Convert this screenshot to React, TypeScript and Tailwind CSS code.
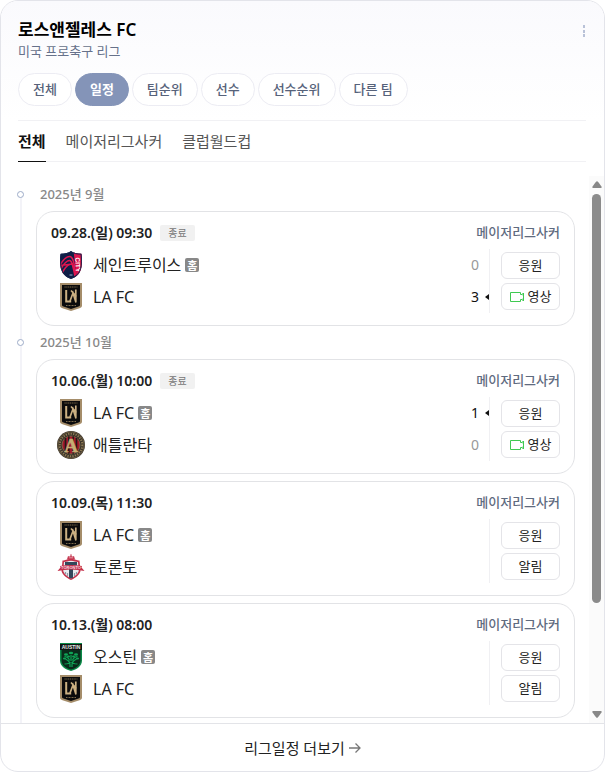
import React, { useState } from 'react';

type TeamId = 'stl' | 'lafc' | 'atl' | 'tor' | 'aus';

interface Side {
  team: TeamId;
  score?: number;
}

interface Match {
  id: string;
  date: string;
  finished: boolean;
  home: Side;
  away: Side;
}

interface Month {
  label: string;
  matches: Match[];
}

const TEAM_NAMES: Record<TeamId, string> = {
  stl: '세인트루이스',
  lafc: 'LA FC',
  atl: '애틀란타',
  tor: '토론토',
  aus: '오스틴',
};

const MENUS = ['전체', '일정', '팀순위', '선수', '선수순위', '다른 팀'];
const LEAGUES = ['전체', '메이저리그사커', '클럽월드컵'];

const MONTHS: Month[] = [
  {
    label: '2025년 9월',
    matches: [
      {
        id: '0928',
        date: '09.28.(일) 09:30',
        finished: true,
        home: { team: 'stl', score: 0 },
        away: { team: 'lafc', score: 3 },
      },
    ],
  },
  {
    label: '2025년 10월',
    matches: [
      {
        id: '1006',
        date: '10.06.(월) 10:00',
        finished: true,
        home: { team: 'lafc', score: 1 },
        away: { team: 'atl', score: 0 },
      },
      { id: '1009', date: '10.09.(목) 11:30', finished: false, home: { team: 'lafc' }, away: { team: 'tor' } },
      { id: '1013', date: '10.13.(월) 08:00', finished: false, home: { team: 'aus' }, away: { team: 'lafc' } },
    ],
  },
];

function LafcLogo() {
  return (
    <svg viewBox="0 0 28 28" className="size-7" aria-hidden="true">
      <path d="M3 0h22v22.500c0 1.500-1 2.200-2.500 2.700L14 28l-8.500-2.800C4 24.700 3 24 3 22.500z" fill="#a58d6a" />
      <path d="M5 2h18v20c0 .9-.6 1.200-1.500 1.500L14 26l-7.500-2.500c-.9-.3-1.500-.6-1.500-1.500z" fill="#0b0b0c" />
      <path d="M7.500 4h13" stroke="#7d6b4c" strokeWidth="1" strokeDasharray="1.200 .6" />
      <path d="M9 22.500h10" stroke="#7d6b4c" strokeWidth="1" strokeDasharray="1 .5" />
      <path d="M9.200 7v11.500h5" stroke="#cbb082" strokeWidth="2" fill="none" />
      <path d="M13 18l3-8 3 9.500M14 7.500l5.500 6M18.800 6.500V19" stroke="#cbb082" strokeWidth="1.700" fill="none" />
    </svg>
  );
}

function StLouisLogo() {
  return (
    <svg viewBox="0 0 28 28" className="size-7" aria-hidden="true">
      <clipPath id="stl-shield">
        <path d="M14 0c2.500 2 6.500 2.800 10.500 2.700.8 5 .7 11-.5 15.300-1.300 5-5 8.500-10 10-5-1.500-8.700-5-10-10C2.800 13.700 2.700 7.700 3.500 2.700 7.500 2.800 11.500 2 14 0z" />
      </clipPath>
      <g clipPath="url(#stl-shield)">
        <path d="M0 0h28v28H0z" fill="#0f1e46" />
        <path d="M16.500 0H28v28h-8z" fill="#e0154f" />
        <path
          d="M3 14C6 9 9 5.500 12.500 5.500 16 5.500 17 11 19 24M3 19c3-5 6-9.500 9.500-9.500C15 9.500 16 15 18 25M4 24c3-6 5.500-10 9-10.500M3 14.500l13-1.500"
          fill="none"
          stroke="#e0154f"
          strokeWidth="1.600"
        />
        <text
          transform="translate(18.200 6.500) rotate(87)"
          fontSize="6.500"
          fontWeight="700"
          fill="#fff"
          fontFamily="Liberation Sans, sans-serif"
        >
          CITY
        </text>
        <path d="M12.500 24h3" stroke="#9fb0d0" strokeWidth="1" />
      </g>
      <path
        d="M14 .6c2.500 1.800 6 2.600 10 2.600.7 5 .6 10.500-.5 14.600-1.300 4.800-4.800 8.200-9.500 9.600-4.700-1.400-8.200-4.800-9.500-9.600C3.400 13.700 3.300 8.200 4 3.200 8 3.200 11.500 2.400 14 .6z"
        fill="none"
        stroke="#16244d"
        strokeWidth="1"
      />
    </svg>
  );
}

function AtlantaLogo() {
  return (
    <svg viewBox="0 0 28 28" className="size-7" aria-hidden="true">
      <circle cx="14" cy="14" r="14" fill="#3a332b" />
      <circle cx="14" cy="14" r="13.200" fill="none" stroke="#756445" strokeWidth=".8" />
      <circle cx="14" cy="14" r="11.300" fill="none" stroke="#8f7c54" strokeWidth="2" strokeDasharray="1.300 1.200" />
      <circle cx="14" cy="14" r="9" fill="#a3182b" stroke="#84714b" strokeWidth=".8" />
      <path d="M8.500 7v14M11.800 5.200v17.600M16.200 5.200v17.600M19.500 7v14" stroke="#241a18" strokeWidth="1.600" />
      <text
        x="14"
        y="20.500"
        textAnchor="middle"
        fontSize="19"
        fontWeight="700"
        fill="#c6ad74"
        stroke="#c6ad74"
        strokeWidth=".5"
        fontFamily="Liberation Serif, serif"
      >
        A
      </text>
    </svg>
  );
}

function TorontoLogo() {
  return (
    <svg viewBox="0 0 28 28" className="size-7" aria-hidden="true">
      <path d="M10 6.500L11 3l1.500.8L14 .8l1.500 3L17 3l1 3.500z" fill="#c4314b" />
      <path d="M5.500 7.500c3 0 4-1.500 8.500-1.500s5.500 1.500 8.500 1.500L23.500 18c-1 4-5 7-9.500 9-4.500-2-8.500-5-9.500-9z" fill="#c4314b" />
      <path d="M7 9c2.500 0 4-1.300 7-1.300S18.500 9 21 9l.8 9c-1 3.200-4.300 5.700-7.800 7.400-3.500-1.700-6.800-4.200-7.800-7.400z" fill="#e8ebef" />
      <path d="M8 9h12v3.200h-4v12.500l-2 .7-2-.7V12.200H8z" fill="#33475b" />
      <path d="M8.500 19v2M10.500 20v3M17.500 20v3M19.500 19v2" stroke="#8f9aa7" strokeWidth="1.200" />
      <path d="M3 13c7-1.300 15-1.300 22 0l-.5 1.500 3 3.500c-9-2-18-2-27 0l3-3.500z" fill="#c4314b" />
      <text
        x="14"
        y="16.300"
        textAnchor="middle"
        fontSize="4"
        fontWeight="700"
        fill="#f6dde1"
        fontFamily="Liberation Sans, sans-serif"
      >
        TORONTO
      </text>
      <path d="M13 2.800h2M11.800 4.800h4.400" stroke="#f2c9d0" strokeWidth=".7" />
    </svg>
  );
}

function AustinLogo() {
  return (
    <svg viewBox="0 0 28 28" className="size-7" aria-hidden="true">
      <path d="M3 0h22v17.500c0 5.500-5 9-11 10.500C8 26.500 3 23 3 17.500z" fill="#0b8a48" />
      <path d="M4.500 1.500h19v16c0 4.500-4.200 7.600-9.500 9-5.300-1.400-9.500-4.500-9.500-9z" fill="#0a2a1b" />
      <path d="M3 1h22v6H3z" fill="#111614" />
      <text
        x="14"
        y="6"
        textAnchor="middle"
        fontSize="5"
        fontWeight="700"
        fill="#e6ece8"
        fontFamily="Liberation Sans, sans-serif"
      >
        AUSTIN
      </text>
      <path
        d="M13 24c.3-4-.2-6-4.500-8M15 24c-.3-4 .2-6 4.500-8M12.500 17.500c-.5-2-2-3.500-5-4M15.500 17.500c.5-2 2-3.500 5-4M14 18v-6M7.500 21c3 0 5-.5 6-2M20.500 21c-3 0-5-.5-6-2"
        fill="none"
        stroke="#0fa456"
        strokeWidth="1.200"
      />
      <g fill="#0fa456">
        <ellipse cx="9" cy="11.500" rx="2" ry="1.200" />
        <ellipse cx="14" cy="10" rx="2.200" ry="1.200" />
        <ellipse cx="19" cy="11.500" rx="2" ry="1.200" />
        <ellipse cx="7.500" cy="15.500" rx="1.600" ry="1.100" />
        <ellipse cx="20.500" cy="15.500" rx="1.600" ry="1.100" />
        <ellipse cx="11.500" cy="13.500" rx="1.500" ry=".9" />
        <ellipse cx="16.500" cy="13.500" rx="1.500" ry=".9" />
      </g>
    </svg>
  );
}

const LOGOS: Record<TeamId, () => React.JSX.Element> = {
  stl: StLouisLogo,
  lafc: LafcLogo,
  atl: AtlantaLogo,
  tor: TorontoLogo,
  aus: AustinLogo,
};

function VideoIcon() {
  return (
    <svg viewBox="0 0 14 12" className="h-3 w-3.5" fill="none" stroke="#3fc951" aria-hidden="true">
      <path d="M10.500 3.500v-2H.5v9h10v-2" />
      <path d="M10.500 3.500h1.500l1.500-1.500v8l-1.500-1.500h-1.500" />
      <path d="M12.500 2.500h1v2h-1zM12.500 7.500h1v2h-1z" fill="#3fc951" stroke="none" />
    </svg>
  );
}

function TeamRow({ side, isHome, won }: { side: Side; isHome?: boolean; won: boolean }) {
  const Logo = LOGOS[side.team];
  return (
    <div className="flex h-8 items-center pl-1.5">
      <Logo />
      <span className="ml-2 text-base leading-5 text-[#222]">{TEAM_NAMES[side.team]}</span>
      {isHome && (
        <span className="ml-1 flex size-3.5 items-center justify-center rounded-xs bg-[#888] text-[11px] leading-none font-bold text-white">
          홈
        </span>
      )}
      {side.score !== undefined && (
        <span className={won ? 'mr-1.5 ml-auto text-sm text-[#111]' : 'mr-2.5 ml-auto text-sm text-[#999]'}>
          {side.score}
        </span>
      )}
      {won && (
        <svg viewBox="0 0 4 6" className="h-1.5 w-1" aria-hidden="true">
          <path d="M4 0v6L0 3z" fill="#111" />
        </svg>
      )}
    </div>
  );
}

function MatchCard({ match }: { match: Match }) {
  const { home, away } = match;
  const homeWon = (home.score ?? 0) > (away.score ?? 0);
  const awayWon = (away.score ?? 0) > (home.score ?? 0);
  const button =
    'flex h-[27px] items-center justify-center gap-1 rounded-md border border-[#e4e4e8] bg-white text-[13px] text-[#222]';

  return (
    <li className="rounded-[18px] border border-[#e2e3e6] bg-white px-3.5 pt-1 pb-3">
      <div className="flex h-[33px] items-center">
        <strong className="text-sm font-semibold text-[#222]">{match.date}</strong>
        {match.finished && (
          <span className="ml-2 rounded-xs bg-[#f1f1f1] px-2 text-[10px] leading-4 text-[#777]">종료</span>
        )}
        <span className="ml-auto text-[13px] font-medium text-[#5f6b7f]">메이저리그사커</span>
      </div>
      <div className="flex">
        <div className="flex-1 border-r border-[#f0f0f3]">
          <TeamRow side={home} isHome won={homeWon} />
          <TeamRow side={away} won={awayWon} />
        </div>
        <div className="ml-[11px] flex w-[59px] flex-col justify-center gap-1">
          <button type="button" className={button}>
            응원
          </button>
          <button type="button" className={button}>
            {match.finished ? (
              <>
                <VideoIcon />
                영상
              </>
            ) : (
              '알림'
            )}
          </button>
        </div>
      </div>
    </li>
  );
}

export default function App() {
  const [menu, setMenu] = useState('일정');
  const [league, setLeague] = useState('전체');

  return (
    <div className="flex h-screen flex-col overflow-hidden rounded-[18px] border border-[#e3e4ea] bg-white font-['Noto_Sans','Noto_Sans_CJK_KR',sans-serif]">
      <header className="bg-linear-to-b from-[#fafafd] to-white pt-[17px] pr-[18px] pl-[17px]">
        <div className="flex items-start justify-between">
          <div>
            <h1 className="text-[17px] leading-6 font-semibold text-black">로스앤젤레스 FC</h1>
            <p className="text-[13px] leading-[18px] text-[#66718a]">미국 프로축구 리그</p>
          </div>
          <button type="button" aria-label="더보기" className="pt-[7px]">
            <svg viewBox="0 0 4 12" className="h-3 w-1" fill="#b9c2d8">
              <path d="M1 0h2v3H1zM1 5h2v3H1zM1 9h2v3H1z" />
            </svg>
          </button>
        </div>
        <nav className="mt-[13px] flex gap-[3px] border-b border-[#f1f1f4] pb-3.5">
          {MENUS.map((item) => (
            <button
              key={item}
              type="button"
              onClick={() => setMenu(item)}
              className={
                item === menu
                  ? 'h-[33px] rounded-full border border-[#8494b8] bg-[#8494b8] px-3.5 text-[13px] font-bold text-white'
                  : 'h-[33px] rounded-full border border-[#ececf3] bg-white px-3.5 text-[13px] font-medium text-[#56627a]'
              }
            >
              {item}
            </button>
          ))}
        </nav>
      </header>

      <nav className="mr-[18px] ml-[17px] flex gap-5 border-b border-[#f1f1f4]">
        {LEAGUES.map((item) => (
          <button
            key={item}
            type="button"
            onClick={() => setLeague(item)}
            className={
              item === league
                ? '-mb-px h-[41px] border-b border-[#111] pt-px text-[15px] font-bold text-[#111]'
                : 'h-10 pt-px text-[15px] text-[#555]'
            }
          >
            {item}
          </button>
        ))}
      </nav>

      <div className="mt-3.5 flex min-h-0 flex-1">
        <div className="min-w-0 flex-1 overflow-hidden pt-0.5 pr-3.5 pl-4">
          {MONTHS.map((month, index) => (
            <section key={month.label}>
              <div className="flex h-[33px] items-center">
                {/* the timeline rule starts at the first dot */}
                <div className="flex h-full w-[7px] flex-col items-center">
                  <span className={index === 0 ? 'w-0.5 flex-1' : 'w-0.5 flex-1 bg-[#f3f3f8]'} />
                  <span className="size-[7px] rounded-full border border-[#9dabc8] bg-white" />
                  <span className="w-0.5 flex-1 bg-[#f3f3f8]" />
                </div>
                <h2 className="ml-4 text-[13px] font-medium text-[#888]">{month.label}</h2>
              </div>
              <div className="ml-[3px] border-l-2 border-[#f3f3f8] pl-3.5">
                <ul className={index === MONTHS.length - 1 ? 'flex flex-col gap-[7px] pb-8' : 'flex flex-col gap-[7px]'}>
                  {month.matches.map((match) => (
                    <MatchCard key={match.id} match={match} />
                  ))}
                </ul>
              </div>
            </section>
          ))}
        </div>
        <div className="flex w-[15px] flex-col items-center bg-[#fbfbfb] py-[5px]" aria-hidden="true">
          <svg viewBox="0 0 10 7" className="h-[7px] w-2.5" fill="#888">
            <path d="M4 .8Q5-.4 6 .8L9.500 5.500Q10 7 9 7H1Q0 7 .5 5.500z" />
          </svg>
          <div className="my-1.5 flex w-[9px] flex-1 flex-col">
            <div className="h-4/5 rounded-full bg-[#8b8b8b]" />
          </div>
          <svg viewBox="0 0 10 7" className="h-[7px] w-2.5" fill="#888">
            <path d="M4 6.200Q5 7.400 6 6.200L9.500 1.500Q10 0 9 0H1Q0 0 .5 1.500z" />
          </svg>
        </div>
      </div>

      <footer className="border-t border-[#e3e4e8]">
        <a href="#schedule" className="flex h-[47px] items-center justify-center gap-1 pt-px text-[15px] text-[#222]">
          리그일정 더보기
          <svg viewBox="0 0 12 12" className="size-3" fill="none" stroke="#777" strokeWidth="1.300" aria-hidden="true">
            <path d="M0 6h11M6.500 1.500L11 6l-4.500 4.500" />
          </svg>
        </a>
      </footer>
    </div>
  );
}
